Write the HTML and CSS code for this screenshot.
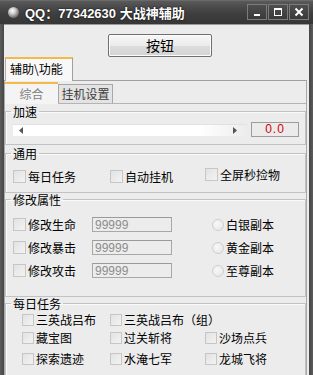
FILE: index.html
```html
<!DOCTYPE html>
<html lang="zh">
<head>
<meta charset="utf-8">
<title>大战神辅助</title>
<link rel="stylesheet" href="styles.css">
</head>
<body>
<div class="window">
  <div class="titlebar">
    <span class="app-icon"></span>
    <span class="title">QQ：77342630 大战神辅助</span>
    <div class="ctrls">
      <span class="cbtn"><svg width="10" height="10" viewBox="0 0 10 10"><rect x="2" y="7" width="6" height="2" fill="#fff"/></svg></span>
      <span class="cbtn"><svg width="10" height="10" viewBox="0 0 10 10"><rect x="1.5" y="1.5" width="7" height="7" fill="none" stroke="#fff" stroke-width="1"/><rect x="1" y="1" width="8" height="2" fill="#fff"/></svg></span>
      <span class="cbtn"><svg width="10" height="10" viewBox="0 0 10 10"><path d="M1.5 1.5 L8.5 8.5 M8.5 1.5 L1.5 8.5" stroke="#fff" stroke-width="2"/></svg></span>
    </div>
  </div>
  <div class="client">
    <div class="btn-row"><button class="btn">按钮</button></div>
    <div class="tabs outer-tabs"><div class="tab active">辅助\功能</div></div>
    <div class="panel">
      <div class="tabs inner-tabs">
        <div class="itab active">综合</div>
        <div class="itab">挂机设置</div>
      </div>
      <div class="inner-panel">
        <fieldset class="group g-speed">
          <legend>加速</legend>
          <div class="speed-row">
            <div class="track">
              <svg class="arr" width="5" height="7" viewBox="0 0 5 7"><path d="M4 0 L0 3.5 L4 7 Z" fill="#555"/></svg>
              <svg class="arr" width="5" height="7" viewBox="0 0 5 7"><path d="M0 0 L4 3.5 L0 7 Z" fill="#555"/></svg>
            </div>
            <div class="value">0.0</div>
          </div>
        </fieldset>
        <fieldset class="group g-common">
          <legend>通用</legend>
          <div class="common-grid">
            <label class="chk"><span class="box"></span>每日任务</label>
            <label class="chk"><span class="box"></span>自动挂机</label>
            <label class="chk raise"><span class="box"></span>全屏秒捡物</label>
          </div>
        </fieldset>
        <fieldset class="group g-attr">
          <legend>修改属性</legend>
          <div class="attr-grid">
            <label class="chk"><span class="box"></span>修改生命</label>
            <input class="field" type="text" value="99999" readonly>
            <label class="rad"><span class="circle"></span>白银副本</label>
            <label class="chk"><span class="box"></span>修改暴击</label>
            <input class="field" type="text" value="99999" readonly>
            <label class="rad"><span class="circle"></span>黄金副本</label>
            <label class="chk"><span class="box"></span>修改攻击</label>
            <input class="field" type="text" value="99999" readonly>
            <label class="rad"><span class="circle"></span>至尊副本</label>
          </div>
        </fieldset>
        <fieldset class="group g-daily">
          <legend>每日任务</legend>
          <div class="daily-grid">
            <label class="chk small"><span class="box"></span>三英战吕布</label>
            <label class="chk small span2"><span class="box"></span>三英战吕布（组）</label>
            <label class="chk small"><span class="box"></span>藏宝图</label>
            <label class="chk small"><span class="box"></span>过关斩将</label>
            <label class="chk small"><span class="box"></span>沙场点兵</label>
            <label class="chk small"><span class="box"></span>探索遗迹</label>
            <label class="chk small"><span class="box"></span>水淹七军</label>
            <label class="chk small"><span class="box"></span>龙城飞将</label>
          </div>
        </fieldset>
      </div>
    </div>
  </div>
</div>
</body>
</html>
```

FILE: styles.css
```css
* { box-sizing: border-box; margin: 0; padding: 0; }
html, body { width: 313px; height: 375px; overflow: hidden; }
body {
  font-family: "Noto Sans CJK SC", "Liberation Sans", sans-serif;
  font-size: 12px;
  color: #000;
  background: #4a4a4a;
}
.window {
  width: 313px;
  height: 375px;
  display: flex;
  flex-direction: column;
  background: linear-gradient(to right, #5c5c5c, #4a4a4a 3px, #4a4a4a 310px, #5c5c5c);
  overflow: hidden;
}
.titlebar {
  height: 24px;
  flex: none;
  display: flex;
  align-items: center;
  padding: 0 4px 0 8px;
  background: linear-gradient(#7a7a7a 0, #5a5a5a 1px, #4d4d4d 6px, #3e3e3e 14px, #363636 24px);
}
.app-icon {
  width: 11px;
  height: 11px;
  border-radius: 50%;
  background: radial-gradient(circle at 40% 35%, #ffffff 0, #d0d0d0 30%, #707070 70%, #2a2a2a 100%);
}
.title {
  margin-left: 6px;
  color: #fff;
  font-weight: bold;
  font-size: 13px;
  font-family: "Liberation Sans", "Noto Sans CJK SC", sans-serif;
  text-shadow: 0 0 2px #000;
  white-space: nowrap;
}
.ctrls { margin-left: auto; display: flex; gap: 1px; }
.cbtn {
  width: 20px;
  height: 16px;
  border: 1px solid #7c7c7c;
  background: linear-gradient(#4e4e4e, #3a3a3a);
  display: flex;
  align-items: center;
  justify-content: center;
}
.client {
  flex: 1;
  margin: 0 4px;
  background: #ececec;
  border-top: 1px solid #9a9a9a;
  display: flex;
  flex-direction: column;
  min-height: 0;
}
.btn-row { padding-top: 9px; height: 32px; flex: none; }
.btn {
  margin-left: 104px;
  width: 104px;
  height: 23px;
  border: 1px solid #707070;
  border-radius: 2px;
  background: linear-gradient(#f7f7f7, #ebebeb 50%, #dddddd 51%, #d4d4d4);
  box-shadow: inset 0 0 0 1px #fcfcfc;
  font-family: "Noto Sans CJK SC", sans-serif;
  font-size: 14px;
  color: #000;
  line-height: 19px;
}
.tabs { display: flex; flex: none; }
.outer-tabs { height: 23px; }
.tab {
  margin-left: 1px;
  width: 68px;
  height: 24px;
  margin-bottom: -1px;
  z-index: 1;
  background: #f8f8f8;
  border-top: 2px solid #f5b84a;
  border-left: 1px solid #b0b0b0;
  border-right: 1px solid #a0a0a0;
  padding-left: 4px;
  line-height: 20px;
  font-size: 12px;
}
.panel {
  flex: 1;
  margin-right: 2px;
  border-top: 1px solid #a0a0a0;
  border-left: 1px solid #a8a8a8;
  border-right: 1px solid #a8a8a8;
  display: flex;
  flex-direction: column;
  min-height: 0;
}
.inner-tabs { height: 22px; padding-top: 1px; align-items: flex-end; }
.itab {
  height: 19px;
  line-height: 17px;
  text-align: center;
  font-size: 12px;
  background: #e3e3e3;
  border: 1px solid #a8a8a8;
  border-bottom: none;
  color: #3c3c3c;
  width: 55px;
}
.itab.active {
  width: 53px;
  height: 22px;
  margin-bottom: -1px;
  z-index: 1;
  line-height: 20px;
  background: #f4f4f4;
  border: none;
  border-top: 2px solid #f5b84a;
  color: #808080;
}
.inner-panel {
  flex: 1;
  border-top: 1px solid #b4b4b4;
  padding-top: 0;
  min-height: 0;
}
.group {
  border: 1px solid #c2c2c2;
  box-shadow: inset 1px 1px 0 #fafafa;
  margin: 0;
  padding: 0 6px 0 7px;
  min-width: 0;
}
.group legend {
  padding: 0 2px;
  margin-left: -2px;
  line-height: 13px;
  font-size: 12px;
}
.g-speed { margin-top: 1px; padding-top: 4px; padding-bottom: 7px; }
.speed-row { display: flex; align-items: center; gap: 4px; height: 15px; }
.track {
  flex: 1;
  height: 12px;
  margin-top: 1px;
  background: linear-gradient(to right, #ffffff 0, #ffffff 80%, #f4f4f4 92%, #ececec 100%);
  border-top: 1px solid #e2e2e2;
  display: flex;
  align-items: center;
  justify-content: space-between;
  padding: 0 9px 0 6px;
}
.value {
  width: 48px;
  height: 15px;
  border: 1px solid #9c9c9c;
  background: #ebebeb;
  color: #d40000;
  text-align: center;
  font-family: "Liberation Sans", sans-serif;
  font-size: 12px;
  line-height: 13px;
  letter-spacing: 1px;
}
.g-common { margin-top: 2px; padding-top: 8px; padding-bottom: 8px; }
.common-grid { display: grid; grid-template-columns: 97px 95px auto; height: 16px; align-items: center; }
.chk { display: flex; align-items: center; gap: 2px; white-space: nowrap; line-height: 15px; }
.box {
  width: 13px;
  height: 13px;
  border: 1px solid #c6c6c6;
  background: linear-gradient(135deg, #e2e2e2, #f3f3f3);
  flex: none;
}
.chk.small .box { width: 12px; height: 12px; }
.raise { position: relative; top: -2px; }
.g-attr { padding-top: 11px; padding-bottom: 18px; }
.attr-grid {
  display: grid;
  grid-template-columns: 79px 120px auto;
  grid-auto-rows: 15px;
  row-gap: 8px;
  align-items: center;
}
.field {
  width: 80px;
  height: 15px;
  border: 1px solid #a8a8a8;
  border-top-color: #9a9a9a;
  background: #ececec;
  color: #8c8c8c;
  font-family: "Liberation Sans", sans-serif;
  font-size: 12px;
  padding-left: 2px;
  outline: none;
}
.rad { display: flex; align-items: center; gap: 2px; white-space: nowrap; }
.circle {
  width: 12px;
  height: 12px;
  border-radius: 50%;
  border: 1px solid #cfcfcf;
  background: radial-gradient(circle at 40% 40%, #f8f8f8, #e4e4e4);
}
.g-daily { padding-top: 2px; padding-bottom: 20px; }
.daily-grid {
  display: grid;
  grid-template-columns: 88px 95px auto;
  grid-template-rows: 18px 21px 15px;
  padding-left: 9px;
  align-items: start;
}
.span2 { grid-column: 2 / 4; }
```
